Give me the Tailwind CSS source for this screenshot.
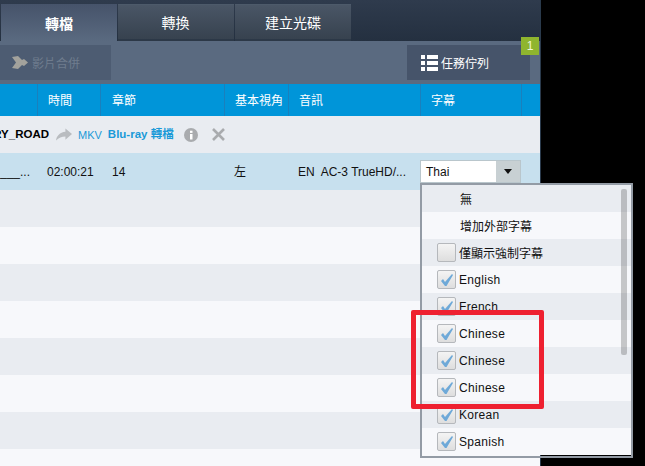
<!DOCTYPE html>
<html lang="zh-Hant">
<head>
  <meta charset="UTF-8">
  <title>轉檔</title>
  <script src="https://cdn.jsdelivr.net/npm/@tailwindcss/browser@4"></script>
</head>
<body class="bg-black">
  <div class="relative w-[645px] h-[466px] overflow-hidden bg-black font-['Liberation_Sans','Noto_Sans_CJK_TC',sans-serif] text-xs">
    <div class="w-[541px] h-[466px] overflow-hidden border-r border-[#2a3a4c] flex flex-col">

      <!-- Tabs -->
      <div class="h-[41px] shrink-0 flex gap-px pt-1 pl-px bg-gradient-to-b from-[#2f3b4d] to-[#243040]">
        <div class="w-[116px] pt-[2px] flex items-center justify-center text-sm font-bold text-white bg-gradient-to-b from-[#46536a] to-[#5a6a80]">轉檔</div>
        <div class="w-[116px] pt-[2px] pr-px flex items-center justify-center text-sm text-white border-t border-[#4d5a6a] border-b-2 border-b-[#2c3847] bg-gradient-to-b from-[#4a5666] to-[#37424f]">轉換</div>
        <div class="w-[116px] pt-[2px] flex items-center justify-center text-sm text-white border-t border-[#4d5a6a] border-b-2 border-b-[#2c3847] bg-gradient-to-b from-[#4a5666] to-[#37424f]">建立光碟</div>
      </div>

      <!-- Toolbar -->
      <div class="h-[43px] shrink-0 flex justify-between items-start pt-1 pr-[10px] bg-[#5a6a80]">
        <div class="w-[111px] h-[35px] flex items-center pl-3 gap-1 bg-[#4d5c72] text-[#6f7c8e]">
          <svg width="16" height="13" viewBox="0 0 16 13" fill="#a3a29c"><path d="M0 1l6-1 4 4 2-1 4 3.500-4 3.500-2-1-4 4-6-1 4-5.500z"/></svg>
          <span class="pt-[3px]">影片合併</span>
        </div>
        <div class="relative w-[123px] h-[35px] flex items-center pl-[14px] gap-[3px] bg-[#46546a] text-white">
          <svg width="17" height="16" viewBox="0 0 17 16" fill="#fff"><path d="M0 0h4v4H0zM6 0h11v4H6zM0 6h4v4H0zM6 6h11v4H6zM0 12h4v4H0zM6 12h11v4H6z"/></svg>
          <span class="pt-[3px]">任務佇列</span>
          <div class="absolute -top-2 -right-[9px] w-[18px] h-[18px] flex items-center justify-center bg-[#8fb52e] text-[#eef5d8]">1</div>
        </div>
      </div>

      <!-- Column header -->
      <div class="h-8 shrink-0 grid grid-cols-[38px_63px_124px_64px_132px_101px_18px] items-stretch bg-[#0095d9] text-white">
        <div class="border-r border-[#1a80bd]"></div>
        <div class="border-r border-[#1a80bd] pl-[10px] pt-px flex items-center">時間</div>
        <div class="border-r border-[#1a80bd] pl-[11px] pt-px flex items-center">章節</div>
        <div class="border-r border-[#1a80bd] pl-[10px] pt-px flex items-center">基本視角</div>
        <div class="border-r border-[#1a80bd] pl-[10px] pt-px flex items-center">音訊</div>
        <div class="border-r border-[#1a80bd] pl-[10px] pt-px flex items-center">字幕</div>
        <div></div>
      </div>

      <!-- Group row -->
      <div class="h-[37px] shrink-0 flex items-center bg-[#e9ecf1]">
        <div class="w-[49px] pt-px flex justify-end overflow-hidden font-bold text-[11.500px] text-black whitespace-nowrap">FURY_ROAD</div>
        <svg class="ml-[7px]" width="16" height="13" viewBox="0 0 17 13" fill="#b9bcc0"><path d="M10 0l7 6-7 6V8.500C6 8.500 3 9.500 0 13c.5-5 4-9 10-9.500z"/></svg>
        <span class="ml-[6px] pt-px text-[11px] text-[#1b9ad8]">MKV</span>
        <span class="ml-[6px] pt-px font-bold text-[11.500px] text-[#1b9ad8]">Blu-ray 轉檔</span>
        <svg class="ml-[10px]" width="14" height="14" viewBox="0 0 14 14"><circle cx="7" cy="7" r="7" fill="#a9abae"/><rect x="6" y="6" width="2.500" height="5.500" fill="#fff"/><rect x="6" y="2.700" width="2.500" height="2.200" fill="#fff"/></svg>
        <svg class="ml-[14px]" width="13" height="13" viewBox="0 0 13 13" stroke="#a9abae" stroke-width="2.600"><path d="M1 1l11 11M12 1L1 12"/></svg>
      </div>

      <!-- Selected row -->
      <div class="h-[37px] shrink-0 grid grid-cols-[38px_63px_124px_64px_132px_101px_18px] items-center bg-[#c7e0ee] text-[#111]">
        <div class="whitespace-nowrap">___...</div>
        <div class="pl-[9px]">02:00:21</div>
        <div class="pl-[11px]">14</div>
        <div class="pl-[9px]">左</div>
        <div class="pl-[9px] whitespace-nowrap">EN&nbsp; AC-3 TrueHD/...</div>
        <div class="-ml-px">
          <div class="w-[101px] h-[23px] flex border border-[#b9c6cc] bg-white">
            <div class="flex-1 pl-[5px] flex items-center">Thai</div>
            <div class="w-6 flex items-center justify-center bg-[#c8d0d3]">
              <svg width="8" height="5" viewBox="0 0 8 5" fill="#111"><path d="M0 0h8L4 5z"/></svg>
            </div>
          </div>
        </div>
        <div></div>
      </div>

      <!-- Empty rows -->
      <div class="h-[37px] shrink-0 bg-[#e9ecf1]"></div>
      <div class="h-[37px] shrink-0 bg-[#f7f8fb]"></div>
      <div class="h-[37px] shrink-0 bg-[#e9ecf1]"></div>
      <div class="h-[37px] shrink-0 bg-[#f7f8fb]"></div>
      <div class="h-[37px] shrink-0 bg-[#e9ecf1]"></div>
      <div class="h-[37px] shrink-0 bg-[#f7f8fb]"></div>
      <div class="h-[37px] shrink-0 bg-[#e9ecf1]"></div>
      <div class="h-[37px] shrink-0 bg-[#f7f8fb]"></div>
    </div>

    <!-- Subtitle dropdown -->
    <div class="absolute left-[420px] top-[183px] w-[213px] h-[275px] border-2 border-[#939ba5] text-[#111]">
      <div class="h-[27px] flex items-center pl-[38px] pt-[3px] bg-[#e9ecf1]">無</div>
      <div class="h-[27px] flex items-center pl-[38px] pt-[3px] bg-[#f7f8fb]">增加外部字幕</div>
      <div class="h-[27px] flex items-center pl-[15px] gap-[3px] bg-[#e9ecf1]">
        <div class="w-[19px] h-[19px] rounded-[2px] border border-[#b5b8bc] bg-gradient-to-b from-[#f4f4f4] to-[#dedede]"></div><span class="pt-[3px]">僅顯示強制字幕</span>
      </div>
      <div class="h-[27px] flex items-center pl-[15px] gap-[3px] tracking-[0.3px] bg-[#f7f8fb]">
        <div class="w-[19px] h-[19px] rounded-[2px] border border-[#b5b8bc] bg-gradient-to-b from-[#f4f4f4] to-[#dedede] flex items-center justify-center"><svg width="12" height="12" viewBox="0 0 12 12" fill="#6ea9d8"><path d="M0 7l2-2 2 3 7-8 1 1-6.500 11H4z"/></svg></div><span>English</span>
      </div>
      <div class="h-[27px] flex items-center pl-[15px] gap-[3px] tracking-[0.3px] bg-[#e9ecf1]">
        <div class="w-[19px] h-[19px] rounded-[2px] border border-[#b5b8bc] bg-gradient-to-b from-[#f4f4f4] to-[#dedede] flex items-center justify-center"><svg width="12" height="12" viewBox="0 0 12 12" fill="#6ea9d8"><path d="M0 7l2-2 2 3 7-8 1 1-6.500 11H4z"/></svg></div><span>French</span>
      </div>
      <div class="h-[27px] flex items-center pl-[15px] gap-[3px] tracking-[0.3px] bg-[#f7f8fb]">
        <div class="w-[19px] h-[19px] rounded-[2px] border border-[#b5b8bc] bg-gradient-to-b from-[#f4f4f4] to-[#dedede] flex items-center justify-center"><svg width="12" height="12" viewBox="0 0 12 12" fill="#6ea9d8"><path d="M0 7l2-2 2 3 7-8 1 1-6.500 11H4z"/></svg></div><span>Chinese</span>
      </div>
      <div class="h-[27px] flex items-center pl-[15px] gap-[3px] tracking-[0.3px] bg-[#e9ecf1]">
        <div class="w-[19px] h-[19px] rounded-[2px] border border-[#b5b8bc] bg-gradient-to-b from-[#f4f4f4] to-[#dedede] flex items-center justify-center"><svg width="12" height="12" viewBox="0 0 12 12" fill="#6ea9d8"><path d="M0 7l2-2 2 3 7-8 1 1-6.500 11H4z"/></svg></div><span>Chinese</span>
      </div>
      <div class="h-[27px] flex items-center pl-[15px] gap-[3px] tracking-[0.3px] bg-[#f7f8fb]">
        <div class="w-[19px] h-[19px] rounded-[2px] border border-[#b5b8bc] bg-gradient-to-b from-[#f4f4f4] to-[#dedede] flex items-center justify-center"><svg width="12" height="12" viewBox="0 0 12 12" fill="#6ea9d8"><path d="M0 7l2-2 2 3 7-8 1 1-6.500 11H4z"/></svg></div><span>Chinese</span>
      </div>
      <div class="h-[27px] flex items-center pl-[15px] gap-[3px] tracking-[0.3px] bg-[#e9ecf1]">
        <div class="w-[19px] h-[19px] rounded-[2px] border border-[#b5b8bc] bg-gradient-to-b from-[#f4f4f4] to-[#dedede] flex items-center justify-center"><svg width="12" height="12" viewBox="0 0 12 12" fill="#6ea9d8"><path d="M0 7l2-2 2 3 7-8 1 1-6.500 11H4z"/></svg></div><span>Korean</span>
      </div>
      <div class="h-[27px] flex items-center pl-[15px] gap-[3px] tracking-[0.3px] bg-[#f7f8fb]">
        <div class="w-[19px] h-[19px] rounded-[2px] border border-[#b5b8bc] bg-gradient-to-b from-[#f4f4f4] to-[#dedede] flex items-center justify-center"><svg width="12" height="12" viewBox="0 0 12 12" fill="#6ea9d8"><path d="M0 7l2-2 2 3 7-8 1 1-6.500 11H4z"/></svg></div><span>Spanish</span>
      </div>
      <div class="absolute left-[199px] top-1 w-1.5 h-[166px] rounded-[2px] bg-black/20"></div>
    </div>

    <!-- Red highlight -->
    <div class="absolute left-[411px] top-[310px] w-[133px] h-[99px] rounded-[2px] border-[5px] border-[#ee2030]"></div>
  </div>
</body>
</html>
